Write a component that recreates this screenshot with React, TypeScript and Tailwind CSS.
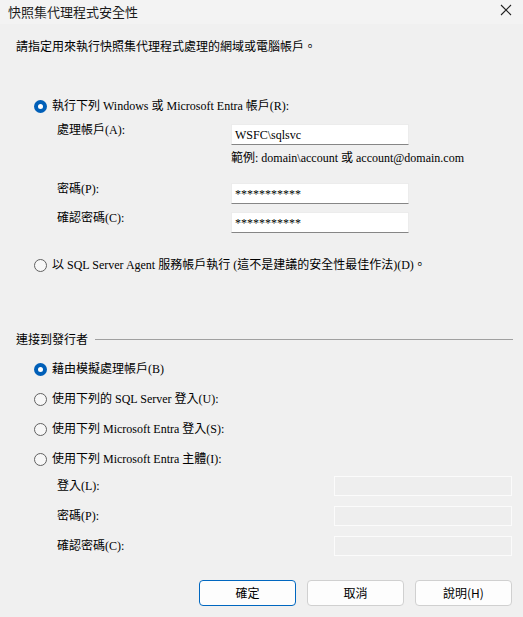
import React from "react";

const serif = { fontFamily: '"Liberation Serif", "Noto Sans CJK TC", serif' };

function Radio({ checked, label }: { checked?: boolean; label: string }) {
  return (
    <div className="flex items-center h-4 pl-[34px]">
      {checked ? (
        <span className="w-[13px] h-[13px] rounded-full bg-[#005fb8] flex items-center justify-center shrink-0">
          <span className="w-[5px] h-[5px] rounded-full bg-white" />
        </span>
      ) : (
        <span className="w-[13px] h-[13px] rounded-full border border-[#616161] bg-[#f7f7f7] shrink-0" />
      )}
      <span className="ml-[5px] text-[12px] text-black leading-4 whitespace-nowrap" style={serif}>
        {label}
      </span>
    </div>
  );
}

function TextBox({ value }: { value: string }) {
  return (
    <div className="w-[178px] h-[21px] bg-white border border-[#ececec] border-b-[#868686] flex items-center px-[3px] text-[12px] text-black leading-none" style={serif}>
      {value}
    </div>
  );
}

function FieldRow({ label, value }: { label: string; value: string }) {
  return (
    <div className="flex items-start h-[21px]">
      <div className="w-[231px] pl-[57px] text-[12px] leading-4 text-black whitespace-nowrap shrink-0" style={serif}>
        <div className="-mt-[2px]">{label}</div>
      </div>
      <TextBox value={value} />
    </div>
  );
}

function DisabledRow({ label }: { label: string }) {
  return (
    <div className="flex items-center h-5">
      <div className="w-[334px] pl-[57px] text-[12px] leading-4 text-black whitespace-nowrap shrink-0" style={serif}>
        {label}
      </div>
      <div className="w-[178px] h-5 border border-[#fbfbfb] bg-[#eeeeee]" />
    </div>
  );
}

function Btn({ label, primary }: { label: string; primary?: boolean }) {
  return (
    <div
      className={`w-[97px] h-[26px] rounded-[4px] bg-[#fdfdfd] flex items-center justify-center text-[12px] text-black border ${
        primary ? "border-[#0067c0]" : "border-[#d0d0d0]"
      }`}
      style={{ fontFamily: '"Noto Sans CJK TC", sans-serif' }}
    >
      {label}
    </div>
  );
}

export default function App() {
  return (
    <div className="w-[523px] h-[617px] bg-[#f0f0f0] flex flex-col overflow-hidden" style={{ fontFamily: '"Noto Sans CJK TC", sans-serif' }}>
      {/* title bar */}
      <div className="h-6 bg-[#f3f3f3] flex items-center justify-between pl-2 pr-[6px] shrink-0">
        <span className="text-[13px] text-[#1a1a1a] leading-none -mt-[2px]">快照集代理程式安全性</span>
        <svg width="12" height="12" viewBox="0 0 12 12" className="mr-[5px] -mt-[4px]">
          <path d="M1 1 L11 11 M11 1 L1 11" stroke="#222" strokeWidth="1.1" />
        </svg>
      </div>

      {/* instruction */}
      <div className="mt-[14px] pl-4 h-4 text-[12px] leading-4 text-black">請指定用來執行快照集代理程式處理的網域或電腦帳戶。</div>

      <div className="mt-[44px]">
        <Radio checked label="執行下列 Windows 或 Microsoft Entra 帳戶(R):" />
      </div>

      <div className="mt-[10px]">
        <FieldRow label="處理帳戶(A):" value="WSFC\sqlsvc" />
      </div>
      <div className="mt-[5px] pl-[231px] h-4 text-[12px] leading-4 text-black whitespace-nowrap" style={serif}>
        範例: domain\account 或 account@domain.com
      </div>
      <div className="mt-[17px]">
        <FieldRow label="密碼(P):" value="***********" />
      </div>
      <div className="mt-[8px]">
        <FieldRow label="確認密碼(C):" value="***********" />
      </div>

      <div className="mt-[24px]">
        <Radio label="以 SQL Server Agent 服務帳戶執行 (這不是建議的安全性最佳作法)(D)。" />
      </div>

      {/* section header */}
      <div className="mt-[58px] flex items-center h-4 pl-4 pr-[10px]">
        <span className="text-[12px] leading-4 text-black whitespace-nowrap">連接到發行者</span>
        <div className="ml-[7px] flex-1 h-px bg-[#a0a0a0]" />
      </div>

      <div className="mt-[14px] flex flex-col gap-[14px]">
        <Radio checked label="藉由模擬處理帳戶(B)" />
        <Radio label="使用下列的 SQL Server 登入(U):" />
        <Radio label="使用下列 Microsoft Entra 登入(S):" />
        <Radio label="使用下列 Microsoft Entra 主體(I):" />
      </div>

      <div className="mt-[9px] flex flex-col gap-[10px]">
        <DisabledRow label="登入(L):" />
        <DisabledRow label="密碼(P):" />
        <DisabledRow label="確認密碼(C):" />
      </div>

      <div className="mt-[24px] flex justify-end gap-[11px] pr-[11px]">
        <Btn primary label="確定" />
        <Btn label="取消" />
        <Btn label="說明(H)" />
      </div>
    </div>
  );
}
